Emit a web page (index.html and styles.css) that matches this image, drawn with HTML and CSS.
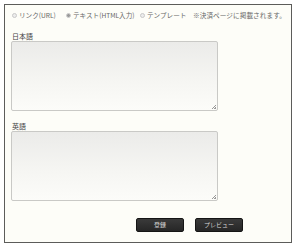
FILE: index.html
```html
<!DOCTYPE html>
<html lang="ja">
<head>
<meta charset="utf-8">
<link rel="stylesheet" href="styles.css">
</head>
<body>
<div class="panel">
  <div class="radios">
    <span class="opt"><span class="radio"></span>リンク(URL)</span>
    <span class="opt"><span class="radio on"></span>テキスト(HTML入力)</span>
    <span class="opt"><span class="radio"></span>テンプレート</span>
    <span class="note">※決済ページに掲載されます。</span>
  </div>
  <div class="label first">日本語</div>
  <div class="area"><span class="grip"></span></div>
  <div class="label">英語</div>
  <div class="area"><span class="grip"></span></div>
  <div class="buttons">
    <span class="btn">登録</span>
    <span class="btn">プレビュー</span>
  </div>
</div>
</body>
</html>
```
FILE: styles.css
```css
html, body { margin: 0; padding: 0; background: #ffffff; }
body { font-family: "Noto Sans CJK JP", "Noto Sans", sans-serif; color: #555; }
.panel {
  margin: 4px 0 0 4px;
  width: 288px;
  height: 239px;
  box-sizing: border-box;
  border: 1px solid #5c5c5a;
  background: #fdfdf8;
  padding: 5px 0 0 6px;
  display: flex;
  flex-direction: column;
}
.radios {
  display: flex;
  align-items: center;
  height: 10px;
  font-size: 6.6px;
  line-height: 10px;
  color: #666;
  white-space: nowrap;
}
.opt { display: flex; align-items: center; }
.opt:nth-child(1) { margin-left: 1px; width: 54px; }
.opt:nth-child(2) { width: 74px; }
.opt:nth-child(3) { width: 53px; }
.radio {
  width: 5px; height: 5px; box-sizing: border-box;
  border-radius: 50%;
  border: 1px solid #c8c8c8;
  background: #ececec;
  margin-right: 2px;
}
.radio.on { background: #9a9a9a; border-color: #cfcfcf; }
.note { letter-spacing: 0.1px; }
.label {
  font-size: 7px;
  line-height: 10px;
  height: 10px;
  padding-left: 1px;
  color: #444;
  margin-top: 10px;
}
.label.first { margin-top: 11px; }
.area {
  width: 207px;
  height: 70px;
  box-sizing: border-box;
  border: 1px solid #c9c9c6;
  border-radius: 2px;
  background: linear-gradient(#ebebe9, #f6f6f3 60%, #fcfcf9);
  position: relative;
}
.grip {
  position: absolute;
  right: 1px; bottom: 1px;
  width: 4px; height: 4px;
  background: linear-gradient(135deg, transparent 45%, #999 45%, #999 55%, transparent 55%, transparent 75%, #999 75%);
}
.buttons {
  display: flex;
  gap: 11px;
  margin-top: 17px;
  padding-left: 125px;
}
.btn {
  width: 48px;
  height: 14px;
  box-sizing: border-box;
  border: 1px solid #151515;
  border-radius: 2px;
  background: linear-gradient(#3a3a3a, #262626);
  color: #d8d8d8;
  font-size: 6px;
  line-height: 12px;
  text-align: center;
}
```
